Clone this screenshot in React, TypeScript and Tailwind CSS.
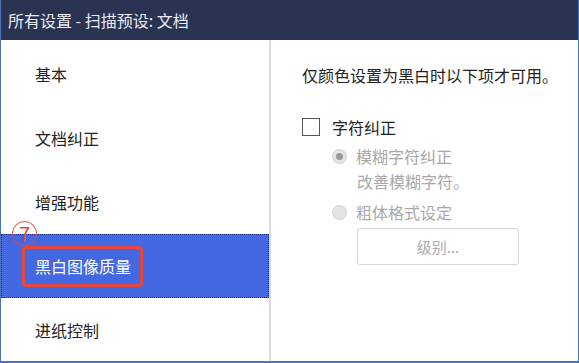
import React from "react";

const font = { fontFamily: '"Noto Sans CJK SC", "Liberation Sans", sans-serif' };

const items = ["基本", "文档纠正", "增强功能", "黑白图像质量", "进纸控制"];

function NavItem({ label, selected }: { label: string; selected?: boolean }) {
  if (selected) {
    return (
      <div className="relative h-[64px]">
        <div className="absolute left-[11px] top-[-13px] flex h-[25px] w-[25px] items-center justify-center rounded-full border-[1.5px] border-[#e8493c] text-[20px] leading-none text-[#e8493c]">
          7
        </div>
        <div className="flex h-full items-center border border-dotted border-[#1c2f8a] bg-[#4468e2] pl-[20px]">
          <div className="flex h-[41px] w-[121px] items-center rounded-[4px] border-[3px] border-[#e5473d] pl-[10px] text-[16px] text-white">
            {label}
          </div>
        </div>
      </div>
    );
  }
  return (
    <div className="flex h-[64px] items-center pl-[34px] text-[16px] text-[#222]">
      {label}
    </div>
  );
}

function Radio({ checked }: { checked?: boolean }) {
  return (
    <span className="flex h-[15px] w-[15px] items-center justify-center rounded-full border border-[#cfcfcf] bg-[#e4e4e4]">
      {checked && <span className="h-[7px] w-[7px] rounded-full bg-[#9a9a9a]" />}
    </span>
  );
}

export default function App() {
  return (
    <div
      className="flex h-[363px] w-[579px] flex-col overflow-hidden border-x border-b-2 border-[#4d72b8] bg-white"
      style={font}
    >
      <div className="flex h-[40px] shrink-0 items-center bg-[#2b3352] pl-[7px] text-[16px] text-[#e9ecf3]">
        所有设置 - 扫描预设: 文档
      </div>
      <div className="flex flex-1">
        <div className="w-[268px] pt-[2px]">
          {items.map((it) => (
            <NavItem key={it} label={it} selected={it === "黑白图像质量"} />
          ))}
        </div>
        <div className="w-[2px] bg-[#dadada]" />
        <div className="flex-1 pl-[31px] pt-[24px] text-[16px] leading-[22px]">
          <div className="text-[#222]">仅颜色设置为黑白时以下项才可用。</div>
          <div className="mt-[30px] flex items-center">
            <span className="h-[18px] w-[18px] border border-[#555]" />
            <span className="ml-[12px] text-[#222]">字符纠正</span>
          </div>
          <div className="ml-[30px] mt-[7px] text-[#a8a8a8]">
            <div className="flex items-center">
              <Radio checked />
              <span className="ml-[9px]">模糊字符纠正</span>
            </div>
            <div className="ml-[25px] mt-[3px]">改善模糊字符。</div>
            <div className="mt-[9px] flex items-center">
              <Radio />
              <span className="ml-[9px]">粗体格式设定</span>
            </div>
            <div className="ml-[25px] mt-[5px] flex h-[37px] w-[162px] items-center justify-center rounded-[3px] border border-[#d6d6d6] text-[15px] text-[#aaa]">
              级别...
            </div>
          </div>
        </div>
      </div>
    </div>
  );
}
